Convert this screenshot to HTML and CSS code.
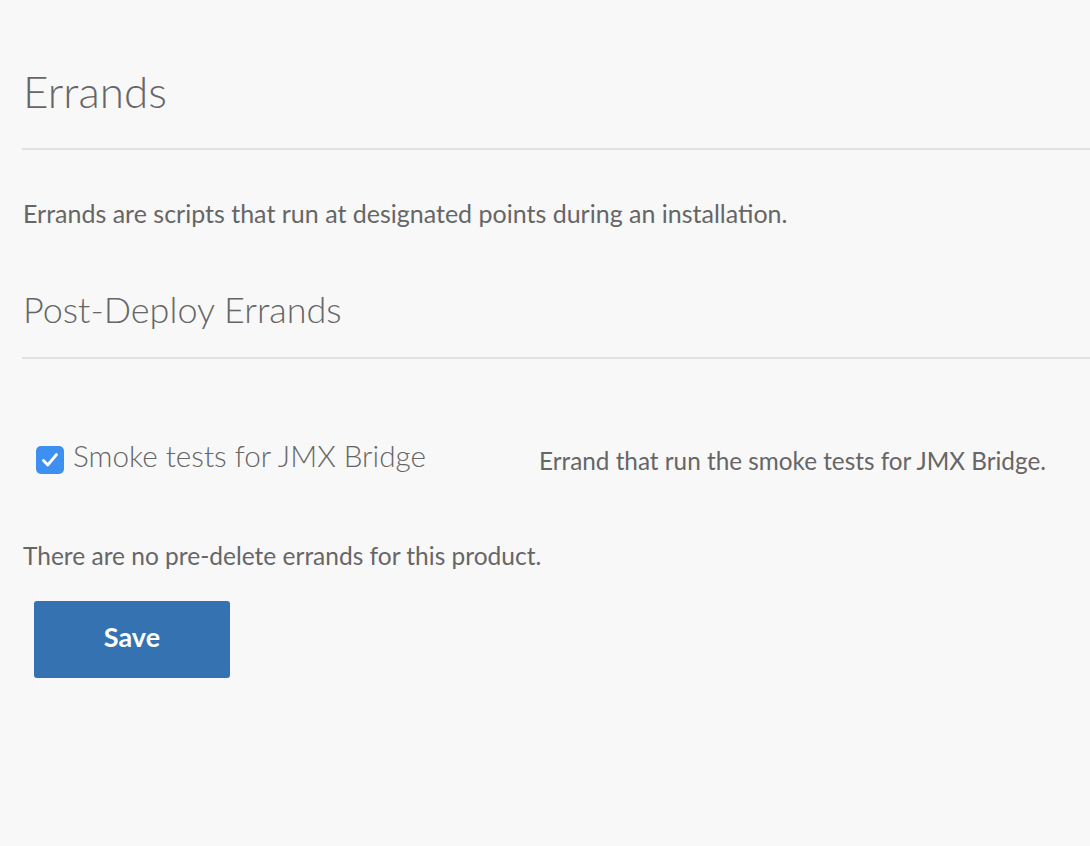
FILE: index.html
```html
<!DOCTYPE html>
<html>
<head>
<meta charset="utf-8">
<link rel="stylesheet" href="styles.css">
</head>
<body>
<div class="page">
  <h1 class="title">Errands</h1>
  <p class="intro">Errands are scripts that run at designated points during an installation.</p>
  <h2 class="subtitle">Post-Deploy Errands</h2>
  <div class="errand-row">
    <label class="errand-label">
      <span class="checkbox">
        <svg viewBox="0 0 28 28" width="28" height="28"><path d="M7.5 14.5 L11.8 19 L20.5 8.5" fill="none" stroke="#fff" stroke-width="2.8" stroke-linecap="round" stroke-linejoin="round"/></svg>
      </span>
      <span class="errand-name">Smoke tests for JMX Bridge</span>
    </label>
    <span class="errand-desc">Errand that run the smoke tests for JMX Bridge.</span>
  </div>
  <p class="none">There are no pre-delete errands for this product.</p>
  <button class="save">Save</button>
</div>
</body>
</html>
```
FILE: styles.css
```css
html, body {
  margin: 0;
  padding: 0;
  background: #f8f8f8;
}
body {
  font-family: "Lato", "Open Sans", sans-serif;
  color: #666666;
}
.page {
  padding: 0 0 0 22px;
}
.title {
  margin: 0;
  padding: 65px 0 31px 1px;
  font-size: 44px;
  font-weight: 300;
  line-height: 52px;
  color: #666;
  border-bottom: 2px solid #e2e2e2;
}
.intro {
  margin: 48px 0 0;
  font-size: 25px;
  line-height: 30px;
  padding-left: 1px;
}
.subtitle {
  margin: 59px 0 0;
  padding: 0 0 26px 1px;
  font-size: 36px;
  font-weight: 300;
  line-height: 44px;
  border-bottom: 2px solid #e2e2e2;
  color: #666;
}
.errand-row {
  display: flex;
  align-items: flex-start;
  margin-top: 79px;
  padding-left: 14px;
}
.errand-label {
  display: flex;
  align-items: flex-start;
  width: 503px;
}
.checkbox {
  width: 28px;
  height: 28px;
  border-radius: 5px;
  background: #3d90f0;
  display: inline-flex;
  margin: 8px 9px 0 0;
}
.errand-name {
  font-size: 29.7px;
  font-weight: 300;
  line-height: 36px;
}
.errand-desc {
  font-size: 24.3px;
  line-height: 30px;
  margin-top: 8px;
}
.none {
  margin: 65px 0 0;
  font-size: 24.5px;
  line-height: 30px;
  padding-left: 1px;
}
.save {
  display: block;
  margin: 30px 0 0 12px;
  padding: 0 0 6px;
  width: 196px;
  height: 77px;
  border: none;
  border-radius: 3px;
  background: #3572b1;
  color: #fff;
  font-family: inherit;
  font-size: 27px;
  font-weight: 700;
}
```
